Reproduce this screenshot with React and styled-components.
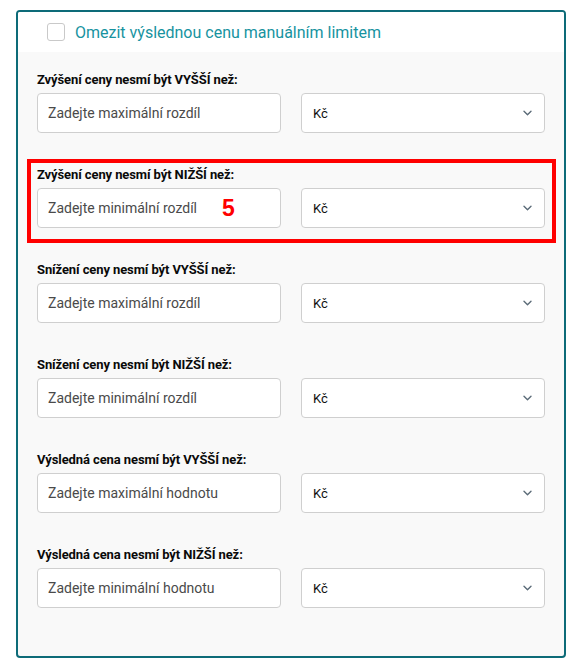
import React from 'react';
import styled, { createGlobalStyle } from 'styled-components';

const GlobalStyle = createGlobalStyle`
  html, body {
    margin: 0;
    padding: 0;
    background: #ffffff;
  }
  body {
    font-family: Roboto, "Liberation Sans", Arial, sans-serif;
  }
`;

const Page = styled.div`
  padding: 10px 0 0 16px;
`;

const Card = styled.div`
  width: 546px;
  border: 2px solid #0d6b78;
  border-radius: 4px;
  overflow: hidden;
  background: #f9f9f9;
`;

const Header = styled.label`
  display: flex;
  align-items: center;
  gap: 10px;
  height: 40px;
  padding-left: 29px;
  background: #ffffff;
  cursor: pointer;
`;

const Checkbox = styled.span`
  width: 16px;
  height: 16px;
  border: 1px solid #c9c9c9;
  border-radius: 3px;
  background: #fff;
`;

const HeaderText = styled.span`
  font-size: 16px;
  color: #17939f;
`;

const Body = styled.div`
  display: flex;
  flex-direction: column;
  gap: 34px;
  padding: 20px 19px 48px;
`;

const Row = styled.div`
  position: relative;
`;

const Highlight = styled.div`
  position: absolute;
  top: -8px;
  left: -10px;
  right: -11px;
  bottom: -15px;
  border: 4px solid #ff0000;
  pointer-events: none;
`;

const Marker = styled.span`
  position: absolute;
  left: 185px;
  top: 30px;
  font-family: "Liberation Sans", Arial, sans-serif;
  font-size: 23px;
  font-weight: 700;
  line-height: 1;
  color: #ff0000;
`;

const Label = styled.div`
  font-size: 13px;
  font-weight: 700;
  line-height: 16px;
  letter-spacing: -0.1px;
  color: #0a0a0a;
  margin-bottom: 5px;
`;

const Fields = styled.div`
  display: grid;
  grid-template-columns: 1fr 1fr;
  gap: 20px;
`;

const Input = styled.input`
  box-sizing: border-box;
  height: 40px;
  width: 100%;
  padding: 0 10px;
  border: 1px solid #cfcfcf;
  border-radius: 4px;
  background: #fff;
  font-family: Roboto, "Liberation Sans", Arial, sans-serif;
  font-size: 14px;
  color: #222;
  outline: none;
  &::placeholder {
    color: #4a4a4a;
  }
`;

const Select = styled.div`
  box-sizing: border-box;
  height: 40px;
  display: flex;
  align-items: center;
  justify-content: space-between;
  padding: 0 12px 0 11px;
  border: 1px solid #cfcfcf;
  border-radius: 4px;
  background: #fff;
  font-size: 13px;
  color: #111;
`;

const Chevron = () => (
  <svg width="9" height="6" viewBox="0 0 9 6" fill="none">
    <path d="M1 1.2l3.5 3.5 3.5-3.5" stroke="#5b6b78" strokeWidth="1.4" strokeLinecap="round" strokeLinejoin="round" />
  </svg>
);

const rows = [
  { label: 'Zvýšení ceny nesmí být VYŠŠÍ než:', placeholder: 'Zadejte maximální rozdíl' },
  { label: 'Zvýšení ceny nesmí být NIŽŠÍ než:', placeholder: 'Zadejte minimální rozdíl', marked: true },
  { label: 'Snížení ceny nesmí být VYŠŠÍ než:', placeholder: 'Zadejte maximální rozdíl' },
  { label: 'Snížení ceny nesmí být NIŽŠÍ než:', placeholder: 'Zadejte minimální rozdíl' },
  { label: 'Výsledná cena nesmí být VYŠŠÍ než:', placeholder: 'Zadejte maximální hodnotu' },
  { label: 'Výsledná cena nesmí být NIŽŠÍ než:', placeholder: 'Zadejte minimální hodnotu' },
];

const App = () => (
  <Page>
    <GlobalStyle />
    <Card>
      <Header>
        <Checkbox />
        <HeaderText>Omezit výslednou cenu manuálním limitem</HeaderText>
      </Header>
      <Body>
        {rows.map((row) => (
          <Row key={row.label}>
            <Label>{row.label}</Label>
            <Fields>
              <Input placeholder={row.placeholder} />
              <Select>
                <span>Kč</span>
                <Chevron />
              </Select>
            </Fields>
            {row.marked && (
              <>
                <Highlight />
                <Marker>5</Marker>
              </>
            )}
          </Row>
        ))}
      </Body>
    </Card>
  </Page>
);

export default App;
